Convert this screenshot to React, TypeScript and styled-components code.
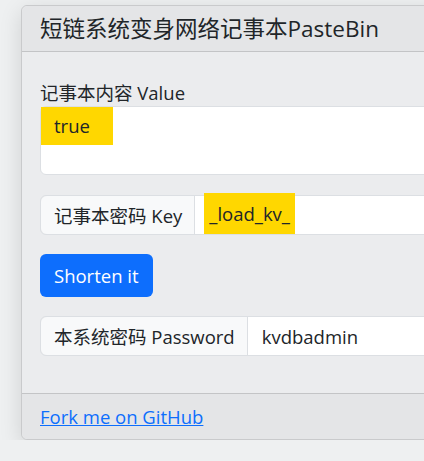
import styled, { createGlobalStyle } from 'styled-components';

const GlobalStyle = createGlobalStyle`
    body {
        margin: 0;
        background: #eef0f1;
        overflow: hidden;
        color: #212529;
        font-family: "Open Sans", "Noto Sans CJK SC", sans-serif;
    }
`;

const Page = styled.div`
    padding: 5px 0 0 21px;
`;

const Card = styled.div`
    width: 640px;
    background: #ebecee;
    border: 1px solid #c9cacc;
    border-radius: 6px;
    box-shadow: 0 6px 22px rgba(0, 0, 0, 0.13);
`;

const CardHeader = styled.div`
    height: 45px;
    display: flex;
    align-items: center;
    padding: 0 18px;
    background: #e4e5e7;
    border-bottom: 1px solid #c3c4c6;
    border-radius: 6px 6px 0 0;
`;

const Title = styled.h5`
    margin: 0;
    font-size: 22.5px;
    font-weight: 400;
    line-height: 1.2;
`;

const CardBody = styled.div`
    padding: 27px 18px 37px;
    display: flex;
    flex-direction: column;
`;

const Label = styled.label`
    font-size: 18.5px;
    line-height: 27px;
    height: 27px;
`;

const TextArea = styled.div`
    height: 67px;
    background: #fff;
    border: 1px solid #dcdfe3;
    border-radius: 6px;
    font-size: 18.5px;
`;

const Mark = styled.span<{ $pad: string; $h: number }>`
    display: inline-block;
    background: #ffd700;
    padding: ${p => p.$pad};
    height: ${p => p.$h}px;
    line-height: ${p => p.$h}px;
`;

const InputGroup = styled.div<{ $top: number }>`
    margin-top: ${p => p.$top}px;
    display: flex;
    height: 38px;
    border: 1px solid #dcdfe3;
    border-radius: 6px;
    font-size: 18.5px;
`;

const Addon = styled.span`
    display: flex;
    align-items: center;
    padding: 0 12px 0 13px;
    background: #f8f9fa;
    border-right: 1px solid #dcdfe3;
    border-radius: 6px 0 0 6px;
`;

const Field = styled.div<{ $pad: number }>`
    flex: 1;
    display: flex;
    align-items: center;
    padding-left: ${p => p.$pad}px;
    background: #fff;
    border-radius: 0 6px 6px 0;
`;

const Button = styled.button`
    margin-top: 19px;
    align-self: flex-start;
    height: 43px;
    padding: 0 14px;
    border: none;
    border-radius: 6px;
    background: #0d6efd;
    color: #fff;
    font-family: inherit;
    font-size: 18.5px;
`;

const CardFooter = styled.div`
    height: 45px;
    display: flex;
    align-items: center;
    padding: 0 18px;
    background: #e4e5e7;
    border-top: 1px solid #c3c4c6;
    border-radius: 0 0 6px 6px;
`;

const Link = styled.a`
    color: #0d6efd;
    font-size: 18.5px;
    text-decoration: underline;
`;

const App = () => {
    return (<>
        <GlobalStyle />
        <Page>
            <Card>
                <CardHeader>
                    <Title>短链系统变身网络记事本PasteBin</Title>
                </CardHeader>
                <CardBody>
                    <Label>记事本内容 Value</Label>
                    <TextArea>
                        <Mark $pad="0 23px 0 13px" $h={38}>true</Mark>
                    </TextArea>
                    <InputGroup $top={20}>
                        <Addon>记事本密码 Key</Addon>
                        <Field $pad={9}>
                            <Mark $pad="0 5px" $h={41} style={{ marginTop: -4 }}>_load_kv_</Mark>
                        </Field>
                    </InputGroup>
                    <Button>Shorten it</Button>
                    <InputGroup $top={19}>
                        <Addon>本系统密码 Password</Addon>
                        <Field $pad={14}>kvdbadmin</Field>
                    </InputGroup>
                </CardBody>
                <CardFooter>
                    <Link href="#">Fork me on GitHub</Link>
                </CardFooter>
            </Card>
        </Page>
    </>)
}

export default App;
